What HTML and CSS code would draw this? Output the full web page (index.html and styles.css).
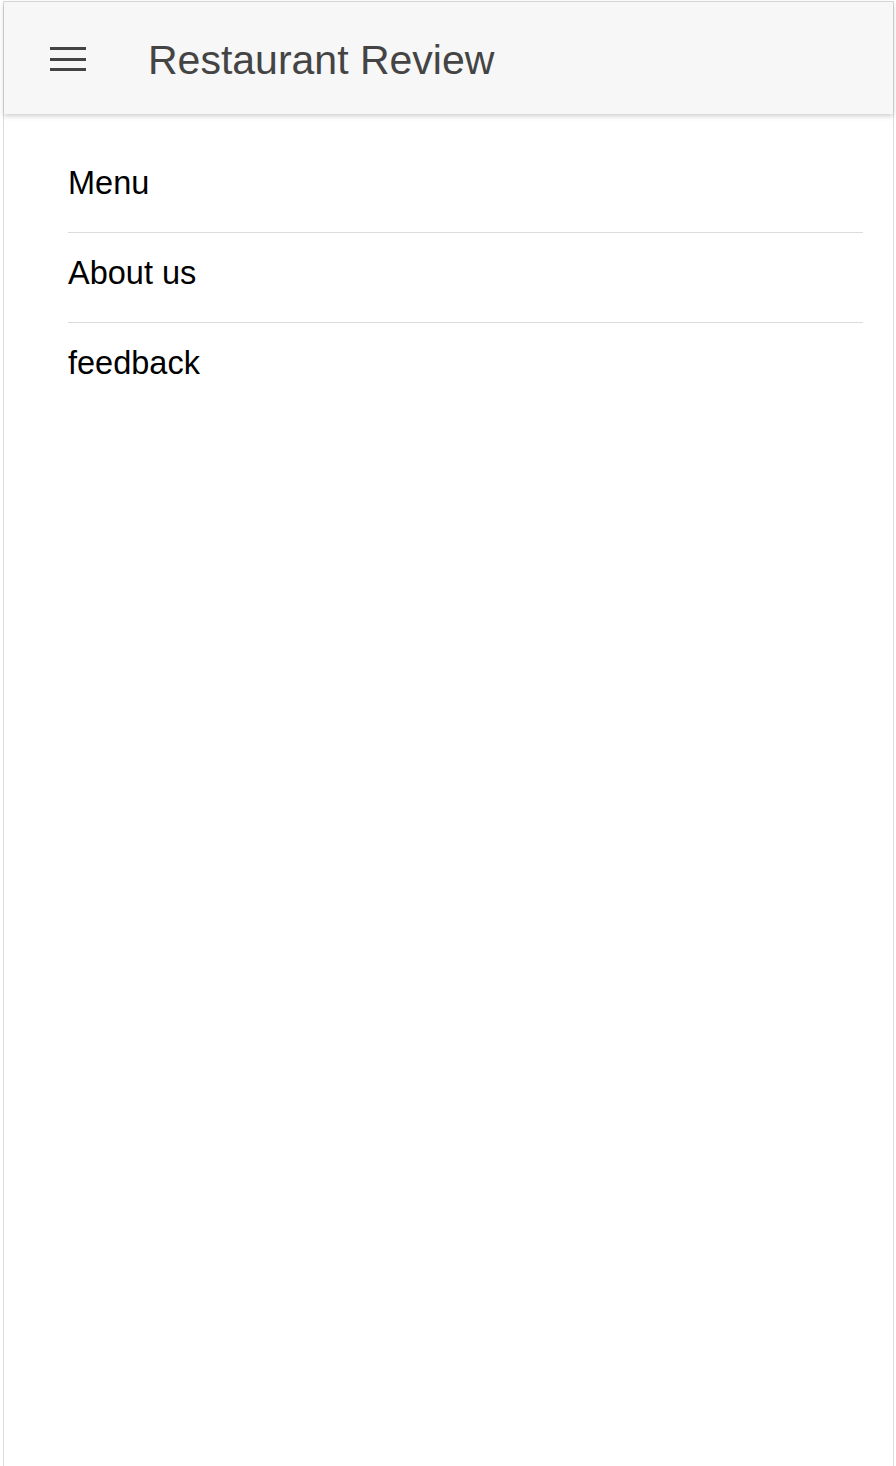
FILE: index.html
```html
<!DOCTYPE html>
<html lang="en">
<head>
<meta charset="utf-8">
<title>Restaurant Review</title>
<link rel="stylesheet" href="styles.css">
</head>
<body>
<div class="frame">
  <header class="appbar">
    <button class="menu-btn" aria-label="Open menu">
      <span class="bar"></span><span class="bar"></span><span class="bar"></span>
    </button>
    <h1 class="title">Restaurant Review</h1>
  </header>
  <nav class="nav">
    <a class="nav-item" href="#">Menu</a>
    <a class="nav-item" href="#">About us</a>
    <a class="nav-item" href="#">feedback</a>
  </nav>
</div>
</body>
</html>
```
FILE: styles.css
```css
html, body {
  margin: 0;
  padding: 0;
  height: 100%;
  background: #fff;
}
body {
  font-family: "Liberation Sans", Arial, Helvetica, sans-serif;
  padding: 1px 2px 0 3px;
  box-sizing: border-box;
}
.frame {
  border: 1px solid #dcdcdc;
  border-bottom: none;
  min-height: 1465px;
  box-sizing: border-box;
  background: #fff;
}
.appbar {
  height: 112px;
  background: #f7f7f7;
  display: flex;
  align-items: center;
  box-shadow: 0 2px 5px rgba(0,0,0,0.2);
  position: relative;
}
.menu-btn {
  background: none;
  border: none;
  padding: 0;
  margin-left: 46px;
  margin-top: 2px;
  width: 36px;
  height: 24px;
  display: flex;
  flex-direction: column;
  justify-content: space-between;
  cursor: pointer;
}
.bar {
  display: block;
  width: 36px;
  height: 3px;
  background: #444;
}
.title {
  margin: 4px 0 0 62px;
  font-size: 41px;
  font-weight: normal;
  color: #444;
}
.nav {
  display: flex;
  flex-direction: column;
  margin: 29px 30px 0 64px;
}
.nav-item {
  display: block;
  height: 90px;
  line-height: 80px;
  font-size: 32.5px;
  color: #000;
  text-decoration: none;
  border-bottom: 1.5px solid #dcdcdc;
  box-sizing: border-box;
}
.nav-item:last-child {
  border-bottom: none;
}
```
